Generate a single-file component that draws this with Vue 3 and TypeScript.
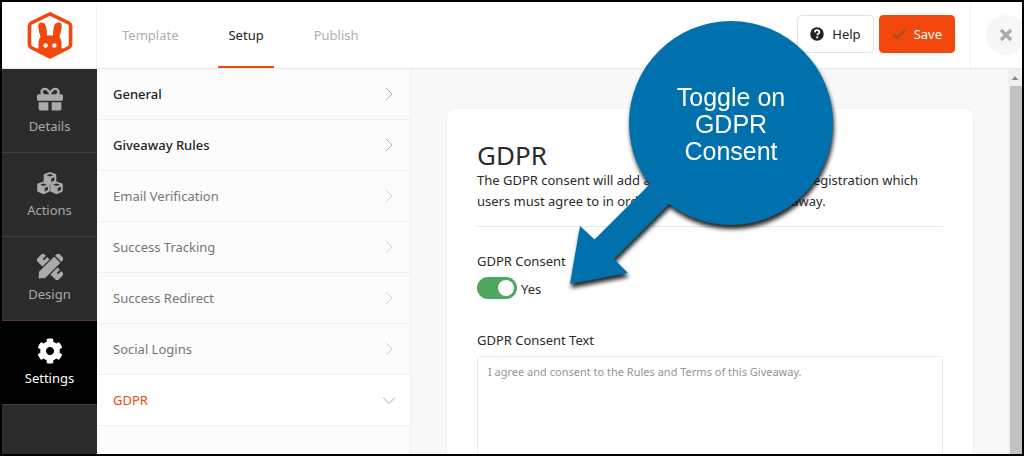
<script setup lang="ts">
import { ref } from 'vue'

interface Section {
  label: string
  ready: boolean
}

const tabs = ['Template', 'Setup', 'Publish']
const activeTab = ref('Setup')

const steps = ['Details', 'Actions', 'Design', 'Settings']
const activeStep = ref('Settings')

const sections: Section[] = [
  { label: 'General', ready: true },
  { label: 'Giveaway Rules', ready: true },
  { label: 'Email Verification', ready: false },
  { label: 'Success Tracking', ready: false },
  { label: 'Success Redirect', ready: false },
  { label: 'Social Logins', ready: false },
  { label: 'GDPR', ready: false },
]
const openSection = ref('GDPR')

const consent = ref(true)
const consentText = ref('I agree and consent to the Rules and Terms of this Giveaway.')
</script>

<template>
  <div class="app">
    <header class="topbar">
      <a class="brand" href="#" aria-label="Home">
        <svg viewBox="0 0 46 48" width="46" height="48" aria-hidden="true">
          <path d="M23 2.8 41.8 12Q43.6 13 43.6 15V33.500Q43.600 35.500 41.800 36.500L23 46 4.200 36.500Q2.400 35.500 2.400 33.500V15Q2.400 13 4.200 12Z" fill="#fff" stroke="#f3470d" stroke-width="3.600" stroke-linejoin="round" />
          <path d="M13.600 25.800C12 21.500 11 16.500 11.400 13.800C12 10.600 16.800 10.600 18.400 13.800C19.600 16.800 20 21 20 24.600H26C26 21 26.400 16.800 27.600 13.800C29.200 10.600 34 10.600 34.600 13.800C35 16.500 34 21.500 32.400 25.800C33.900 27.800 34.500 30 34.500 33V37.500L41 37.500 23 46 5 37.500 11.500 37.500V33C11.500 30 12.100 27.800 13.600 25.800Z" fill="#f3470d" />
          <circle cx="18.600" cy="34.500" r="2.200" fill="#fff" />
          <circle cx="27.400" cy="34.500" r="2.200" fill="#fff" />
        </svg>
      </a>
      <nav class="tabs" aria-label="Editor stages">
        <a
          v-for="tab in tabs"
          :key="tab"
          href="#"
          :class="{ active: tab === activeTab }"
          @click.prevent="activeTab = tab"
        >{{ tab }}</a>
      </nav>
      <div class="actions">
        <button class="btn help" type="button">
          <svg viewBox="0 0 512 512" width="14" height="14" aria-hidden="true">
            <circle cx="256" cy="256" r="248" fill="#222" />
            <path d="M174 196C180 140 218 118 258 118C306 118 342 146 342 190C342 250 268 246 268 300" fill="none" stroke="#fff" stroke-width="64" />
            <circle cx="264" cy="376" r="42" fill="#fff" />
          </svg>
          Help
        </button>
        <button class="btn save" type="button">
          <svg viewBox="0 0 14 12" width="14" height="12" aria-hidden="true">
            <path d="M1 6.2 5 10 13 1.8" fill="none" stroke="#a5501e" stroke-width="2.4" />
          </svg>
          Save
        </button>
      </div>
      <div class="close-cell">
        <button class="close" type="button" aria-label="Close">
          <svg viewBox="0 0 14 14" width="14" height="14" aria-hidden="true">
            <path d="M2 2 12 12M12 2 2 12" fill="none" stroke="#aeaaa9" stroke-width="3.4" />
          </svg>
        </button>
      </div>
    </header>

    <div class="body">
      <nav class="rail" aria-label="Setup steps">
        <a
          v-for="step in steps"
          :key="step"
          href="#"
          :class="{ active: step === activeStep }"
          @click.prevent="activeStep = step"
        >
          <svg v-if="step === 'Details'" viewBox="0 0 512 512" width="26" height="26" fill="currentColor" aria-hidden="true">
            <path d="M32 448c0 17.700 14.300 32 32 32h160V320H32v128zm256 32h160c17.700 0 32-14.300 32-32V320H288v160zm192-320h-42.100c6.200-12.100 10.100-25.500 10.100-40 0-48.500-39.500-88-88-88-41.600 0-68.500 21.300-103 68.300-34.500-47-61.400-68.300-103-68.300-48.500 0-88 39.500-88 88 0 14.500 3.800 27.900 10.100 40H32c-17.700 0-32 14.300-32 32v80c0 8.800 7.200 16 16 16h480c8.800 0 16-7.200 16-16v-80c0-17.700-14.300-32-32-32zm-326.100 0c-22.100 0-40-17.900-40-40s17.900-40 40-40c19.900 0 34.600 3.300 86.100 80h-86.100zm206.100 0h-86.100c51.400-76.500 65.700-80 86.100-80 22.100 0 40 17.900 40 40s-17.900 40-40 40z" />
          </svg>
          <svg v-else-if="step === 'Actions'" viewBox="0 0 26 26" width="26" height="26" aria-hidden="true">
            <g v-for="(p, i) in [[7, 2], [0.5, 11.5], [13.5, 11.5]]" :key="i" :transform="`translate(${p[0]} ${p[1]})`">
              <path d="M6 0 11.700 2Q12.300 2.300 12.300 3V9.300Q12.300 10 11.700 10.300L6 12.700.3 10.300Q-.3 10 -.3 9.300V3Q-.3 2.300.3 2Z" fill="currentColor" />
              <path d="M2.600 3.200 6 2 9.400 3.200 6 4.500Z" fill="#2b2b2b" />
              <path d="M7.200 6.600 10.400 5.300V8.500L7.200 10Z" fill="#2b2b2b" />
            </g>
          </svg>
          <svg v-else-if="step === 'Design'" viewBox="0 0 26 26" width="26" height="26" aria-hidden="true">
            <g transform="rotate(45 13 13)">
              <rect x="-2" y="8" width="30" height="10" rx="1.500" fill="currentColor" />
              <path d="M3 7.500V12.500M23 7.500V12.500" stroke="#2b2b2b" stroke-width="1.800" />
            </g>
            <g transform="rotate(-45 13 13)">
              <path d="M-4 13 1.500 8H27Q29.500 8 29.500 10.500V15.500Q29.500 18 27 18H1.500Z" fill="currentColor" stroke="#2b2b2b" stroke-width="1.200" />
              <path d="M24 8V18" stroke="#2b2b2b" stroke-width="1.300" />
            </g>
          </svg>
          <svg v-else viewBox="0 0 512 512" width="26" height="26" fill="currentColor" aria-hidden="true">
            <path d="M487.400 315.700l-42.600-24.600c4.300-23.200 4.300-47 0-70.200l42.600-24.600c4.900-2.800 7.100-8.600 5.500-14-11.100-35.600-30-67.800-54.700-94.600-3.800-4.100-10-5.100-14.800-2.300L380.800 110c-17.900-15.400-38.500-27.300-60.800-35.100V25.800c0-5.600-3.900-10.500-9.400-11.700-36.700-8.200-74.300-7.800-109.200 0-5.500 1.200-9.400 6.100-9.400 11.700V75c-22.200 7.900-42.800 19.800-60.800 35.100L88.700 85.500c-4.900-2.800-11-1.900-14.800 2.300-24.700 26.700-43.600 58.900-54.700 94.600-1.700 5.400.6 11.200 5.500 14L67.300 221c-4.300 23.200-4.300 47 0 70.200l-42.600 24.600c-4.900 2.800-7.100 8.600-5.500 14 11.100 35.600 30 67.800 54.700 94.600 3.800 4.100 10 5.100 14.800 2.300l42.600-24.600c17.900 15.400 38.500 27.300 60.800 35.100v49.200c0 5.600 3.900 10.500 9.400 11.700 36.700 8.200 74.300 7.800 109.200 0 5.500-1.200 9.400-6.100 9.400-11.700v-49.200c22.200-7.900 42.800-19.800 60.800-35.100l42.600 24.600c4.900 2.800 11 1.900 14.800-2.300 24.700-26.700 43.600-58.900 54.700-94.600 1.500-5.500-.7-11.300-5.600-14.100zM256 336c-44.100 0-80-35.900-80-80s35.900-80 80-80 80 35.900 80 80-35.900 80-80 80z" />
          </svg>
          <span>{{ step }}</span>
        </a>
      </nav>

      <div class="sections">
        <button
          v-for="section in sections"
          :key="section.label"
          type="button"
          class="section"
          :class="{ ready: section.ready, open: section.label === openSection }"
          :aria-expanded="section.label === openSection"
          @click="openSection = section.label"
        >
          <span>{{ section.label }}</span>
          <svg viewBox="0 0 14 14" width="14" height="14" aria-hidden="true">
            <path v-if="section.label === openSection" d="M1 4.500 7 10.500 13 4.500" />
            <path v-else d="M4 1 10 7 4 13" />
          </svg>
        </button>
      </div>

      <main class="content">
        <div class="card">
          <h1>GDPR</h1>
          <p class="intro">
            The GDPR consent will add a checkbox for the entrant registration which users must agree
            to in order to enter into each giveaway.
          </p>
          <div class="field">
            <label for="consent">GDPR Consent</label>
            <div class="switch-row">
              <input id="consent" v-model="consent" class="switch" type="checkbox" />
              <span>{{ consent ? 'Yes' : 'No' }}</span>
            </div>
          </div>
          <div class="field">
            <label for="consent-text">GDPR Consent Text</label>
            <textarea id="consent-text" v-model="consentText" spellcheck="false"></textarea>
          </div>
        </div>
      </main>

      <div class="scrollbar" aria-hidden="true">
        <svg viewBox="0 0 14 17" width="14" height="17">
          <path d="M3.500 11 7 7 10.500 11Z" fill="#8a8a8a" />
        </svg>
        <div class="thumb"></div>
      </div>
    </div>

    <div class="callout">
      <svg viewBox="0 0 280 280" width="280" height="280" aria-hidden="true">
        <path d="M86 173 25.500 233.500 11 220 1 278 59 267 45 253 105 193Z" fill="#0071ad" />
        <circle cx="162" cy="117" r="102" fill="#0071ad" />
      </svg>
      <p>Toggle on<br />GDPR<br />Consent</p>
    </div>
  </div>
</template>

<style>
body {
  margin: 0;
}
</style>

<style scoped>
.app {
  position: relative;
  box-sizing: border-box;
  height: 100vh;
  display: flex;
  flex-direction: column;
  overflow: hidden;
  border: 2px solid #000;
  background: #fff;
  color: #2b2b2b;
  font-family: "Noto Sans", "Open Sans", sans-serif;
  font-size: 13px;
  line-height: 21px;
}

a {
  text-decoration: none;
}

button {
  font: inherit;
  cursor: pointer;
}

.topbar {
  display: flex;
  flex: none;
  height: 66px;
  border-bottom: 1px solid #e6e6e6;
}

.brand {
  display: flex;
  align-items: center;
  justify-content: center;
  box-sizing: border-box;
  width: 95px;
  padding-left: 2px;
  border-right: 1px solid #f3f3f3;
}

.tabs {
  display: flex;
  flex: 1;
  gap: 30px;
  padding-left: 15px;
}

.tabs a {
  display: flex;
  align-items: center;
  box-sizing: border-box;
  padding: 2px 10px 0;
  border-bottom: 2px solid transparent;
  color: #b0afab;
}

.tabs a.active {
  border-color: #f3470d;
  color: #222;
}

.actions {
  display: flex;
  align-items: center;
  gap: 5px;
  padding: 0 15px 2px 0;
}

.btn {
  display: flex;
  align-items: center;
  justify-content: center;
  gap: 8px;
  box-sizing: border-box;
  height: 38px;
  padding: 0 12px;
  border: 1px solid #e3e3e3;
  border-radius: 4px;
  background: #fff;
  color: #222;
}

.btn.save {
  border-color: #f3470d;
  background: #f3470d;
  color: #fff;
}

.close-cell {
  display: flex;
  align-items: center;
  box-sizing: border-box;
  width: 52px;
  padding-left: 15px;
  overflow: hidden;
  border-left: 1px solid #f3f3f3;
}

.close {
  display: flex;
  flex: none;
  align-items: center;
  justify-content: center;
  width: 40px;
  height: 40px;
  padding: 0;
  border: 0;
  border-radius: 50%;
  background: #f7f7f7;
}

.body {
  display: flex;
  flex: 1;
  min-height: 0;
}

.rail {
  flex: none;
  width: 95px;
  background: #2b2b2b;
}

.rail a {
  display: flex;
  flex-direction: column;
  align-items: center;
  gap: 4px;
  box-sizing: border-box;
  height: 84px;
  padding-top: 17px;
  border-bottom: 1px solid #533833;
  color: #aba9ab;
}

.rail a.active {
  background: #000;
  color: #fff;
}

.sections {
  flex: none;
  width: 313px;
  border-right: 1px solid #efefef;
  background: #fcfcfc;
}

.section {
  display: flex;
  align-items: center;
  justify-content: space-between;
  box-sizing: border-box;
  width: 100%;
  height: 51px;
  padding: 0 14px 0 16px;
  border: 0;
  border-bottom: 1px solid #efefef;
  background: transparent;
  color: #7a7475;
  text-align: left;
}

.section svg {
  fill: none;
  stroke: #d2d2d2;
}

.section.ready {
  color: #222;
  font-weight: 500;
}

.section.ready svg,
.section.open svg {
  stroke: #b0b0b0;
}

.section.open {
  background: #fff;
  color: #f3470d;
}

.content {
  flex: 1;
  min-width: 0;
  overflow: hidden;
  padding: 39px 34px 0 35px;
  background: #f8f8f8;
}

.card {
  box-sizing: border-box;
  padding: 31px 30px;
  border: 1px solid #f1f1f1;
  border-radius: 8px;
  background: #fff;
}

h1 {
  margin: 0;
  font-size: 26px;
  font-weight: 400;
  line-height: 30px;
}

.intro {
  margin: 0 0 24px;
  padding-bottom: 14px;
  border-bottom: 1px solid #e8e8e8;
}

.field {
  margin-bottom: 30px;
}

.field label {
  display: block;
}

.switch-row {
  display: flex;
  align-items: flex-start;
  gap: 4px;
  margin-top: 5px;
}

.switch-row span {
  padding-top: 2px;
}

.switch {
  flex: none;
  box-sizing: border-box;
  width: 40px;
  height: 22px;
  margin: 0;
  padding: 3px;
  appearance: none;
  border-radius: 11px;
  background: #c8c8c8;
}

.switch::before {
  content: "";
  display: block;
  width: 16px;
  height: 16px;
  border-radius: 50%;
  background: #fff;
}

.switch:checked {
  background: #4da760;
}

.switch:checked::before {
  margin-left: auto;
}

textarea {
  display: block;
  box-sizing: border-box;
  width: 100%;
  height: 120px;
  margin-top: 5px;
  padding: 4px 10px;
  resize: none;
  border: 1px solid #ebebeb;
  border-radius: 3px;
  background: #fff;
  color: #959595;
  font: inherit;
  font-size: 11px;
}

.scrollbar {
  display: flex;
  flex: none;
  flex-direction: column;
  width: 14px;
  background: #f1f1f1;
}

.thumb {
  flex: 1;
  margin-left: 2px;
  background: #c1c1c1;
}

.callout {
  position: absolute;
  top: 4px;
  left: 567px;
  width: 280px;
  height: 280px;
  pointer-events: none;
  filter: drop-shadow(1px 4px 2px rgba(0, 0, 0, 0.85));
}

.callout p {
  position: absolute;
  top: 78px;
  left: 60px;
  width: 204px;
  margin: 0;
  color: #fff;
  font-family: "Liberation Sans", Arial, sans-serif;
  font-size: 25px;
  line-height: 27px;
  text-align: center;
}
</style>
